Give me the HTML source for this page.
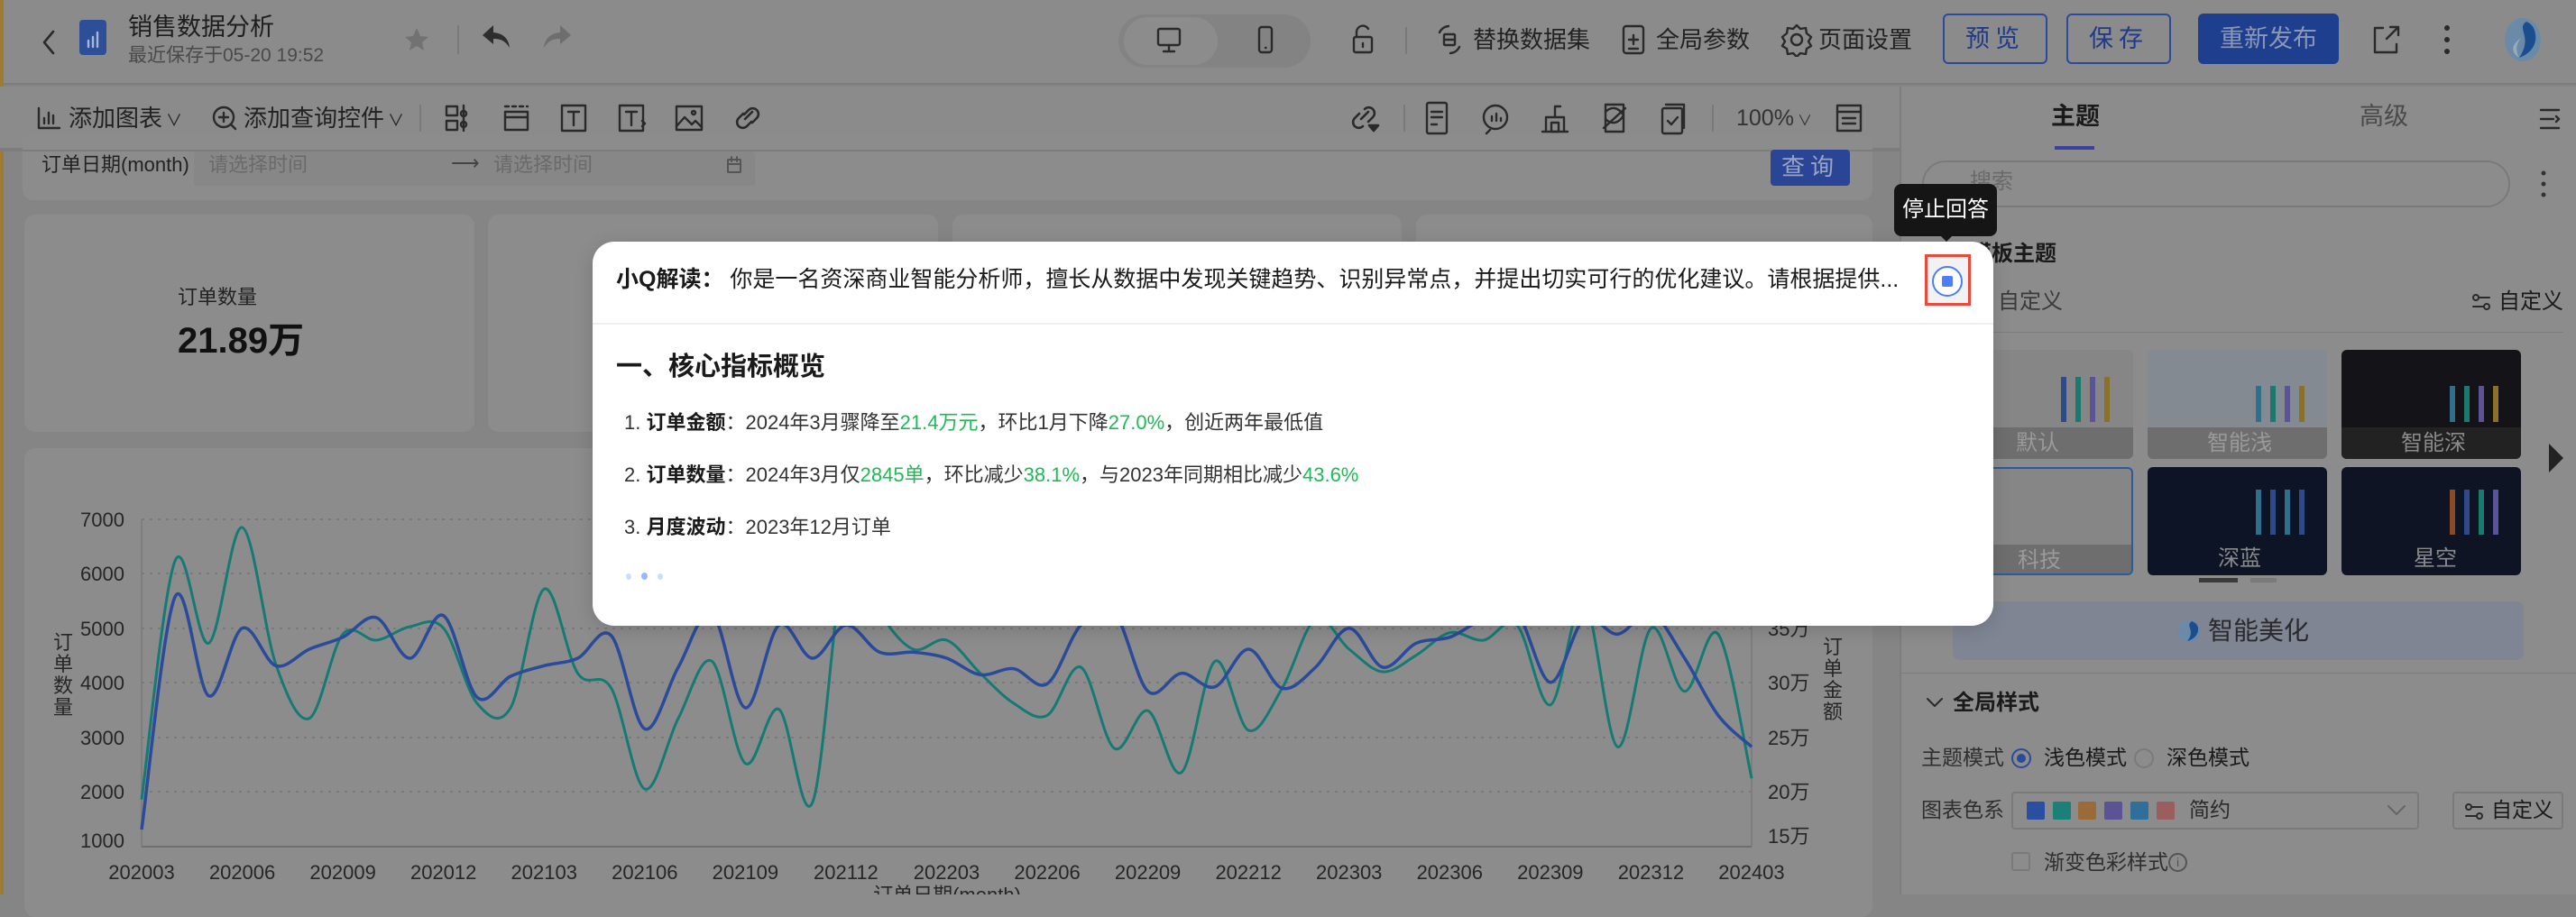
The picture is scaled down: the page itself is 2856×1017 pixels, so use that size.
<!DOCTYPE html>
<html><head><meta charset="utf-8">
<style>
*{box-sizing:border-box;margin:0;padding:0}
body{width:2856px;height:992px;overflow:hidden;background:#858585;font-family:"Liberation Sans","Noto Sans CJK SC",sans-serif;color:#262626;position:relative}
.a{position:absolute}
.t{position:absolute;white-space:nowrap;line-height:1}
svg.i{position:absolute;fill:none;stroke:#2a2a2a;stroke-width:2.6;stroke-linecap:round;stroke-linejoin:round}
</style></head><body>

<!-- header -->
<div class="a" style="left:0;top:0;width:2856px;height:94px;background:#8b8b8b;border-bottom:2px solid #7d7d7d"></div>
<div class="a" style="left:0;top:0;width:4px;height:992px;background:#a07a30"></div>
<svg class="i" style="left:44px;top:32px" width="20" height="30"><path d="M15 3 L5 15 L15 27"/></svg>
<div class="a" style="left:88px;top:22px;width:30px;height:39px;background:#2d4f97;border-radius:4px"></div>
<svg class="i" style="left:94px;top:32px;stroke:#a8b6d8;stroke-width:2.4" width="20" height="24"><path d="M4 20V13M9 20V9M14 20V4"/></svg>
<div class="t" style="left:142px;top:17px;font-size:27px;color:#1e1e1e">销售数据分析</div>
<div class="t" style="left:142px;top:51px;font-size:21px;color:#4a4a4a">最近保存于05-20 19:52</div>
<svg class="a" style="left:447px;top:29px" width="30" height="30"><path d="M15 2l4 9 9 1-7 6 2 9-8-5-8 5 2-9-7-6 9-1z" fill="#727272"/></svg>
<div class="a" style="left:507px;top:28px;width:2px;height:32px;background:#7a7a7a"></div>
<svg class="a" style="left:533px;top:26px" width="36" height="30"><path d="M14 2L2 13l12 10v-6c8 0 13 2 18 10-1-10-7-16-18-17z" fill="#2e2e2e"/></svg>
<svg class="a" style="left:599px;top:26px" width="36" height="30"><path d="M22 2l12 11-12 10v-6c-8 0-13 2-18 10 1-10 7-16 18-17z" fill="#6e6e6e"/></svg>
<div class="a" style="left:1240px;top:16px;width:213px;height:59px;border-radius:30px;background:#838383"></div>
<div class="a" style="left:1246px;top:19px;width:104px;height:53px;border-radius:27px;background:#8c8c8c"></div>
<svg class="i" style="left:1281px;top:30px;stroke-width:2.4" width="32" height="30"><rect x="3" y="2" width="24" height="18" rx="2"/><path d="M15 20v6M9 27h12"/></svg>
<svg class="i" style="left:1393px;top:28px;stroke-width:2.4" width="20" height="34"><rect x="3" y="2" width="14" height="28" rx="3"/><path d="M10 25h0.5"/></svg>
<svg class="i" style="left:1497px;top:26px;stroke-width:2.4" width="28" height="36"><path d="M7 15V9a7 7 0 0 1 13-3"/><rect x="4" y="15" width="20" height="17" rx="2"/><path d="M14 22v4"/></svg>
<div class="a" style="left:1558px;top:30px;width:2px;height:30px;background:#7a7a7a"></div>
<svg class="i" style="left:1590px;top:26px;stroke-width:2.4" width="34" height="36"><path d="M6 10a12 12 0 0 1 10-7M28 26a12 12 0 0 1-10 7"/><rect x="11" y="12" width="12" height="12" rx="1"/><path d="M11 18h12"/></svg>
<div class="t" style="left:1633px;top:31px;font-size:26px;color:#222">替换数据集</div>
<svg class="i" style="left:1796px;top:25px;stroke-width:2.4" width="30" height="38"><rect x="4" y="4" width="22" height="30" rx="3"/><path d="M10 19h10M15 14v10M10 29h10"/></svg>
<div class="t" style="left:1836px;top:31px;font-size:26px;color:#222">全局参数</div>
<svg class="i" style="left:1974px;top:25px;stroke-width:2.4" width="36" height="38"><path d="M18 3l4 4 6-1 1 6 5 4-3 5 3 5-5 3-1 6-6-1-4 4-4-4-6 1-1-6-5-3 3-5-3-5 5-4 1-6 6 1z"/><circle cx="18" cy="19" r="6"/></svg>
<div class="t" style="left:2016px;top:31px;font-size:26px;color:#222">页面设置</div>
<div class="a" style="left:2154px;top:15px;width:116px;height:56px;border:2px solid #2a4a9a;border-radius:6px"></div>
<div class="t" style="left:2154px;top:30px;width:116px;text-align:center;font-size:27px;color:#1e3a8a;letter-spacing:6px">预览</div>
<div class="a" style="left:2291px;top:15px;width:116px;height:56px;border:2px solid #2a4a9a;border-radius:6px"></div>
<div class="t" style="left:2291px;top:30px;width:116px;text-align:center;font-size:27px;color:#1e3a8a;letter-spacing:6px">保存</div>
<div class="a" style="left:2437px;top:15px;width:156px;height:56px;background:#1d3f8e;border-radius:6px"></div>
<div class="t" style="left:2437px;top:30px;width:156px;text-align:center;font-size:27px;color:#8c97b8">重新发布</div>
<svg class="i" style="left:2628px;top:26px;stroke-width:2.4" width="34" height="36"><path d="M14 5H5v27h24v-9"/><path d="M18 17L31 4M22 4h9v9"/></svg>
<svg class="a" style="left:2708px;top:26px" width="10" height="36"><circle cx="5" cy="5" r="3" fill="#2a2a2a"/><circle cx="5" cy="18" r="3" fill="#2a2a2a"/><circle cx="5" cy="31" r="3" fill="#2a2a2a"/></svg>
<svg class="a" style="left:2775px;top:18px" width="44" height="52"><ellipse cx="22" cy="26" rx="20" ry="24" fill="#6a8aa8"/><path d="M26 6c-12 8 8 16-8 40 12-4 20-14 18-26-1-8-5-12-10-14z" fill="#1a4e8e"/><path d="M18 46c-12-8-6-16 2-22-6 8-6 14-2 22z" fill="#9ab"/></svg>

<!-- toolbar -->
<div class="a" style="left:0;top:96px;width:2106px;height:70px;background:#8b8b8b;border-bottom:2px solid #7d7d7d"></div>
<svg class="i" style="left:40px;top:117px;stroke-width:2.4" width="28" height="28"><path d="M3 3v22h23M9 20v-6M14 20V8M19 20v-9"/></svg>
<div class="t" style="left:76px;top:118px;font-size:26px;color:#222">添加图表<span style="font-size:18px;margin-left:4px">∨</span></div>
<svg class="i" style="left:234px;top:116px;stroke-width:2.4" width="30" height="30"><circle cx="14" cy="14" r="11"/><path d="M14 9v10M9 14h10M22 22l5 5"/></svg>
<div class="t" style="left:270px;top:118px;font-size:26px;color:#222">添加查询控件<span style="font-size:18px;margin-left:4px">∨</span></div>
<div class="a" style="left:465px;top:116px;width:2px;height:30px;background:#7a7a7a"></div>
<svg class="i" style="left:492px;top:114px;stroke-width:2.4" width="30" height="34"><rect x="3" y="4" width="12" height="10"/><rect x="3" y="20" width="12" height="10"/><path d="M22 3v28"/><circle cx="22" cy="12" r="3"/><circle cx="22" cy="24" r="3"/></svg>
<svg class="i" style="left:556px;top:114px;stroke-width:2.4" width="32" height="34"><path d="M4 4h4M12 4h4M20 4h4M28 4h1"/><rect x="4" y="10" width="25" height="20"/><path d="M4 16h25"/></svg>
<svg class="i" style="left:620px;top:114px;stroke-width:2.4" width="32" height="34"><rect x="3" y="3" width="26" height="28"/><path d="M10 10h12M16 10v15"/></svg>
<svg class="i" style="left:684px;top:114px;stroke-width:2.4" width="34" height="34"><rect x="3" y="3" width="26" height="28"/><path d="M10 10h12M16 10v15M28 20l3 3-3 3"/></svg>
<svg class="i" style="left:747px;top:114px;stroke-width:2.4" width="34" height="34"><rect x="3" y="4" width="28" height="26"/><path d="M3 26l9-10 8 8 4-4 7 7"/><circle cx="22" cy="11" r="2"/></svg>
<svg class="i" style="left:812px;top:112px;stroke-width:2.6" width="34" height="38"><path d="M14 20l8-8M12 14l-5 5a6 6 0 0 0 9 9l5-5M22 24l5-5a6 6 0 0 0-9-9l-5 5"/></svg>
<svg class="i" style="left:1496px;top:112px;stroke-width:2.6" width="36" height="38"><path d="M13 20l8-8M11 14l-5 5a6 6 0 0 0 9 9M21 23l5-5a6 6 0 0 0-9-9"/><path d="M22 27h10l-5 6z" fill="#2a2a2a"/></svg>
<div class="a" style="left:1556px;top:116px;width:2px;height:30px;background:#7a7a7a"></div>
<svg class="i" style="left:1578px;top:110px;stroke-width:2.4" width="30" height="42"><rect x="4" y="4" width="22" height="34" rx="2"/><path d="M9 14h12M9 20h12M9 28h6"/></svg>
<svg class="i" style="left:1640px;top:112px;stroke-width:2.4" width="36" height="38"><circle cx="18" cy="18" r="13"/><path d="M12 32l-4 4M14 22v-5M19 22v-8M24 22v-3"/></svg>
<svg class="i" style="left:1706px;top:112px;stroke-width:2.4" width="36" height="38"><path d="M4 34h28M8 34V18h20v16M18 18V6M18 6h6"/><rect x="14" y="24" width="8" height="10"/></svg>
<svg class="i" style="left:1772px;top:112px;stroke-width:2.4" width="36" height="38"><path d="M8 4h20v30H8V4z"/><path d="M8 12c6-6 14-6 20 4-6 10-14 10-20 4"/><path d="M6 30L30 8"/></svg>
<svg class="i" style="left:1838px;top:112px;stroke-width:2.4" width="34" height="38"><rect x="5" y="8" width="22" height="28" rx="2"/><path d="M9 4h20v26"/><path d="M11 22l4 4 7-8"/></svg>
<div class="a" style="left:1898px;top:116px;width:2px;height:30px;background:#7a7a7a"></div>
<div class="t" style="left:1925px;top:119px;font-size:25px;color:#333">100%<span style="font-size:16px;margin-left:4px">∨</span></div>
<svg class="i" style="left:2034px;top:114px;stroke-width:2.4" width="32" height="34"><rect x="3" y="3" width="26" height="28"/><path d="M3 10h26M9 17h14M9 23h14"/></svg>

<!-- canvas: filter card -->
<div class="a" style="left:25px;top:150px;width:2051px;height:72px;background:#8c8c8c;border-radius:0 0 12px 12px"></div>
<div class="a" style="left:0;top:166px;width:2106px;height:2px;background:#7d7d7d"></div>
<div class="t" style="left:46px;top:172px;font-size:22px;color:#222">订单日期(month)</div>
<div class="a" style="left:215px;top:168px;width:622px;height:38px;background:#878787;border-radius:4px"></div>
<div class="t" style="left:231px;top:172px;font-size:22px;color:#6a6a6a">请选择时间</div>
<div class="t" style="left:500px;top:170px;font-size:22px;color:#444">⟶</div>
<div class="t" style="left:547px;top:172px;font-size:22px;color:#6a6a6a">请选择时间</div>
<svg class="i" style="left:804px;top:172px;stroke:#555;stroke-width:2" width="20" height="22"><rect x="3" y="5" width="14" height="14" rx="1"/><path d="M3 10h14M7 2v5M13 2v5"/></svg>
<div class="a" style="left:1963px;top:166px;width:88px;height:40px;background:#2a4595;border-radius:4px"></div>
<div class="t" style="left:1963px;top:172px;width:88px;text-align:center;font-size:26px;color:#9aa4c4;letter-spacing:6px">查询</div>

<!-- KPI cards -->
<div class="a" style="left:27px;top:238px;width:499px;height:241px;background:#8c8c8c;border-radius:12px"></div>
<div class="a" style="left:541px;top:238px;width:499px;height:241px;background:#8c8c8c;border-radius:12px"></div>
<div class="a" style="left:1056px;top:238px;width:498px;height:241px;background:#8c8c8c;border-radius:12px"></div>
<div class="a" style="left:1570px;top:238px;width:506px;height:241px;background:#8c8c8c;border-radius:12px"></div>
<div class="t" style="left:197px;top:319px;font-size:22px;color:#222">订单数量</div>
<div class="t" style="left:197px;top:358px;font-size:40px;font-weight:bold;color:#111">21.89万</div>

<!-- chart card -->
<div class="a" style="left:27px;top:497px;width:2049px;height:520px;background:#8c8c8c;border-radius:12px"></div>
<svg class="a" style="left:0;top:0" width="2106" height="992" id="ch">
<g stroke="#7a7a7a" stroke-width="2" stroke-dasharray="3 6">
<line x1="157" y1="576" x2="1942" y2="576"/><line x1="157" y1="636" x2="1942" y2="636"/><line x1="157" y1="697" x2="1942" y2="697"/><line x1="157" y1="757" x2="1942" y2="757"/><line x1="157" y1="818" x2="1942" y2="818"/><line x1="157" y1="878" x2="1942" y2="878"/>
</g>
<line x1="157" y1="939" x2="1942" y2="939" stroke="#6e6e6e" stroke-width="2"/>
<line x1="157" y1="576" x2="157" y2="939" stroke="#7a7a7a" stroke-width="1.5"/>
<line x1="1942" y1="576" x2="1942" y2="939" stroke="#7a7a7a" stroke-width="1.5"/>
<g font-size="22" fill="#262626" text-anchor="end" font-family="Liberation Sans, sans-serif">
<text x="138" y="584">7000</text><text x="138" y="644">6000</text><text x="138" y="705">5000</text><text x="138" y="765">4000</text><text x="138" y="826">3000</text><text x="138" y="886">2000</text><text x="138" y="940">1000</text>
</g>
<g font-size="22" fill="#262626" font-family="Liberation Sans, Noto Sans CJK SC, sans-serif">
<text x="1960" y="705">35万</text><text x="1960" y="765">30万</text><text x="1960" y="826">25万</text><text x="1960" y="886">20万</text><text x="1960" y="935">15万</text>
</g>
<g font-size="22" fill="#262626" text-anchor="middle" font-family="Liberation Sans, sans-serif" id="xl"></g>
<g font-size="22" fill="#262626" font-family="Noto Sans CJK SC, sans-serif" text-anchor="middle">
<text x="70" y="720">订</text><text x="70" y="744">单</text><text x="70" y="768">数</text><text x="70" y="792">量</text>
<text x="2032" y="725">订</text><text x="2032" y="749">单</text><text x="2032" y="773">金</text><text x="2032" y="797">额</text>
</g>
<text x="1050" y="1000" font-size="22" fill="#262626" text-anchor="middle" font-family="Liberation Sans, Noto Sans CJK SC, sans-serif">订单日期(month)</text>
<path id="pg" fill="none" stroke="#167a74" stroke-width="3"/>
<path id="pb" fill="none" stroke="#2a4a9a" stroke-width="3.5"/>
</svg>

<!-- right panel -->
<div class="a" style="left:2106px;top:96px;width:750px;height:896px;background:#8c8c8c;border-left:2px solid #7d7d7d"></div>
<div class="t" style="left:2274px;top:116px;font-size:27px;font-weight:bold;color:#1a1a1a">主题</div>
<div class="t" style="left:2616px;top:116px;font-size:27px;color:#4a4a4a">高级</div>
<div class="a" style="left:2278px;top:162px;width:44px;height:4px;background:#3b3f9e"></div>
<svg class="i" style="left:2814px;top:118px;stroke-width:2.4" width="26" height="28"><path d="M3 4h20M3 14h14M3 24h20M20 11l3 3-3 3"/></svg>
<div class="a" style="left:2131px;top:178px;width:652px;height:52px;border:2px solid #7a7a7a;border-radius:26px"></div>
<div class="t" style="left:2184px;top:190px;font-size:24px;color:#6a6a6a">搜索</div>
<svg class="a" style="left:2816px;top:188px" width="8" height="32"><circle cx="4" cy="4" r="2.5" fill="#333"/><circle cx="4" cy="16" r="2.5" fill="#333"/><circle cx="4" cy="28" r="2.5" fill="#333"/></svg>
<div class="t" style="left:2184px;top:270px;font-size:24px;font-weight:bold;color:#1a1a1a">模板主题</div>
<div class="t" style="left:2215px;top:323px;font-size:24px;color:#3a3a3a">自定义</div>
<svg class="i" style="left:2740px;top:324px;stroke-width:2" width="22" height="22"><circle cx="5" cy="6" r="3"/><path d="M9 6h11M2 16h11"/><circle cx="17" cy="16" r="3"/></svg>
<div class="t" style="left:2770px;top:323px;font-size:24px;color:#1a1a1a">自定义</div>
<div class="a" style="left:2130px;top:368px;width:712px;height:1px;background:#7c7c7c"></div>

<!-- thumbnails -->
<div class="a" style="left:2165px;top:388px;width:200px;height:121px;background:#868686;border-radius:6px;overflow:hidden">
 <div class="a" style="left:120px;top:30px;width:6px;height:50px;background:#2f4a8a"></div><div class="a" style="left:136px;top:30px;width:6px;height:50px;background:#1a7a70"></div><div class="a" style="left:152px;top:30px;width:6px;height:50px;background:#5a5395"></div><div class="a" style="left:168px;top:30px;width:6px;height:50px;background:#8a7028"></div>
 <div class="a" style="left:0;top:86px;width:200px;height:35px;background:#6e6e6e"></div>
 <div class="t" style="left:70px;top:92px;font-size:24px;color:#9a9a9a">默认</div></div>
<div class="a" style="left:2381px;top:388px;width:199px;height:121px;background:#838a92;border-radius:6px;overflow:hidden">
 <div class="a" style="left:120px;top:40px;width:6px;height:40px;background:#2f6f8a"></div><div class="a" style="left:136px;top:40px;width:6px;height:40px;background:#1a7a70"></div><div class="a" style="left:152px;top:40px;width:6px;height:40px;background:#5a5395"></div><div class="a" style="left:168px;top:40px;width:6px;height:40px;background:#8a7028"></div>
 <div class="a" style="left:0;top:86px;width:199px;height:35px;background:#6e6e6e"></div>
 <div class="t" style="left:66px;top:92px;font-size:24px;color:#9a9a9a">智能浅</div></div>
<div class="a" style="left:2596px;top:388px;width:199px;height:121px;background:#141418;border-radius:6px;overflow:hidden">
 <div class="a" style="left:120px;top:40px;width:6px;height:40px;background:#2f6f8a"></div><div class="a" style="left:136px;top:40px;width:6px;height:40px;background:#1a7a70"></div><div class="a" style="left:152px;top:40px;width:6px;height:40px;background:#5a5395"></div><div class="a" style="left:168px;top:40px;width:6px;height:40px;background:#8a7028"></div>
 <div class="a" style="left:0;top:86px;width:199px;height:35px;background:#222"></div>
 <div class="t" style="left:66px;top:92px;font-size:24px;color:#8a8a8a">智能深</div></div>
<div class="a" style="left:2165px;top:518px;width:200px;height:120px;background:#868686;border:2px solid #2f5a9a;border-radius:6px;overflow:hidden">
 <div class="a" style="left:0;top:84px;width:200px;height:36px;background:#6e6e6e"></div>
 <div class="t" style="left:70px;top:90px;font-size:24px;color:#9a9a9a">科技</div></div>
<div class="a" style="left:2381px;top:518px;width:199px;height:120px;background:#0c1426;border-radius:6px;overflow:hidden">
 <div class="a" style="left:120px;top:25px;width:6px;height:50px;background:#2f6f8a"></div><div class="a" style="left:136px;top:25px;width:6px;height:50px;background:#2f4a8a"></div><div class="a" style="left:152px;top:25px;width:6px;height:50px;background:#2f6f8a"></div><div class="a" style="left:168px;top:25px;width:6px;height:50px;background:#2f4a8a"></div>
 <div class="t" style="left:78px;top:90px;font-size:24px;color:#8a8a8a">深蓝</div></div>
<div class="a" style="left:2596px;top:518px;width:199px;height:120px;background:#0f1424;border-radius:6px;overflow:hidden">
 <div class="a" style="left:120px;top:25px;width:6px;height:50px;background:#8a4a28"></div><div class="a" style="left:136px;top:25px;width:6px;height:50px;background:#2f4a8a"></div><div class="a" style="left:152px;top:25px;width:6px;height:50px;background:#1a7a70"></div><div class="a" style="left:168px;top:25px;width:6px;height:50px;background:#5a5395"></div>
 <div class="t" style="left:80px;top:90px;font-size:24px;color:#8a8a8a">星空</div></div>
<svg class="a" style="left:2824px;top:490px" width="20" height="36"><path d="M2 2l16 16-16 16z" fill="#222"/></svg>
<div class="a" style="left:2438px;top:641px;width:43px;height:5px;background:#3a3a3a"></div>
<div class="a" style="left:2495px;top:641px;width:29px;height:5px;background:#7a7a7a"></div>
<div class="a" style="left:2165px;top:667px;width:633px;height:65px;background:#7f8593;border-radius:8px"></div>
<svg class="a" style="left:2414px;top:686px" width="26" height="28"><circle cx="13" cy="14" r="12" fill="#6a8aa8"/><path d="M16 3c-8 5 5 10-5 22 8-2 13-8 12-15-1-4-4-6-7-7z" fill="#1a4e8e"/></svg>
<div class="t" style="left:2448px;top:686px;font-size:28px;color:#2a2a2a">智能美化</div>
<div class="a" style="left:2107px;top:746px;width:749px;height:1px;background:#7c7c7c"></div>
<svg class="i" style="left:2134px;top:772px;stroke-width:2" width="22" height="16"><path d="M3 3l8 8 8-8"/></svg>
<div class="t" style="left:2165px;top:768px;font-size:24px;font-weight:bold;color:#1a1a1a">全局样式</div>
<div class="t" style="left:2130px;top:829px;font-size:23px;color:#2f2f2f">主题模式</div>
<div class="a" style="left:2230px;top:830px;width:22px;height:22px;border:2px solid #2a4a9a;border-radius:50%"></div>
<div class="a" style="left:2236px;top:836px;width:10px;height:10px;background:#2a4a9a;border-radius:50%"></div>
<div class="t" style="left:2266px;top:829px;font-size:23px;color:#1a1a1a">浅色模式</div>
<div class="a" style="left:2366px;top:830px;width:22px;height:22px;border:2px solid #7a7a7a;border-radius:50%"></div>
<div class="t" style="left:2402px;top:829px;font-size:23px;color:#1a1a1a">深色模式</div>
<div class="t" style="left:2130px;top:887px;font-size:23px;color:#2f2f2f">图表色系</div>
<div class="a" style="left:2230px;top:878px;width:452px;height:42px;border:2px solid #7a7a7a;border-radius:4px"></div>
<div class="a" style="left:2247px;top:889px;width:20px;height:20px;background:#2a4fa0;border-radius:2px"></div>
<div class="a" style="left:2276px;top:889px;width:20px;height:20px;background:#1a8078;border-radius:2px"></div>
<div class="a" style="left:2304px;top:889px;width:20px;height:20px;background:#9a6a38;border-radius:2px"></div>
<div class="a" style="left:2333px;top:889px;width:20px;height:20px;background:#5a5395;border-radius:2px"></div>
<div class="a" style="left:2362px;top:889px;width:20px;height:20px;background:#2f6f9a;border-radius:2px"></div>
<div class="a" style="left:2391px;top:889px;width:20px;height:20px;background:#9a5e5e;border-radius:2px"></div>
<div class="t" style="left:2427px;top:887px;font-size:23px;color:#2a2a2a">简约</div>
<svg class="i" style="left:2646px;top:892px;stroke:#666;stroke-width:2" width="22" height="14"><path d="M2 2l9 9 9-9"/></svg>
<div class="a" style="left:2719px;top:878px;width:123px;height:42px;border:2px solid #7a7a7a;border-radius:4px"></div>
<svg class="i" style="left:2732px;top:889px;stroke-width:2" width="22" height="22"><circle cx="5" cy="6" r="3"/><path d="M9 6h11M2 16h11"/><circle cx="17" cy="16" r="3"/></svg>
<div class="t" style="left:2762px;top:887px;font-size:23px;color:#1a1a1a">自定义</div>
<div class="a" style="left:2230px;top:945px;width:21px;height:21px;border:2px solid #7a7a7a;border-radius:3px"></div>
<div class="t" style="left:2266px;top:945px;font-size:23px;color:#2f2f2f">渐变色彩样式</div>
<div class="a" style="left:2404px;top:946px;width:21px;height:21px;border:2px solid #555;border-radius:50%;font-size:14px;text-align:center;line-height:17px;color:#555">i</div>

<!-- modal -->
<div class="a" style="left:657px;top:268px;width:1553px;height:426px;background:#fff;border-radius:24px;box-shadow:0 4px 20px rgba(0,0,0,.15)"></div>
<div class="t" style="left:683px;top:298px;font-size:25px;color:#1a1a1a"><b>小Q解读：</b>&nbsp;你是一名资深商业智能分析师，擅长从数据中发现关键趋势、识别异常点，并提出切实可行的优化建议。请根据提供...</div>
<div class="a" style="left:657px;top:358px;width:1553px;height:2px;background:#eee"></div>
<div class="t" style="left:683px;top:393px;font-size:29px;font-weight:bold;color:#1a1a1a">一、核心指标概览</div>
<div class="t" style="left:692px;top:458px;font-size:22px;color:#333">1. <b style="color:#1a1a1a">订单金额</b>：2024年3月骤降至<span style="color:#1fb955">21.4万元</span>，环比1月下降<span style="color:#1fb955">27.0%</span>，创近两年最低值</div>
<div class="t" style="left:692px;top:516px;font-size:22px;color:#333">2. <b style="color:#1a1a1a">订单数量</b>：2024年3月仅<span style="color:#1fb955">2845单</span>，环比减少<span style="color:#1fb955">38.1%</span>，与2023年同期相比减少<span style="color:#1fb955">43.6%</span></div>
<div class="t" style="left:692px;top:574px;font-size:22px;color:#333">3. <b style="color:#1a1a1a">月度波动</b>：2023年12月订单</div>
<div class="a" style="left:694px;top:636px;width:6px;height:7px;background:#cfdcff;border-radius:50%"></div>
<div class="a" style="left:711px;top:635px;width:7px;height:8px;background:#9bb6ff;border-radius:50%"></div>
<div class="a" style="left:729px;top:636px;width:6px;height:7px;background:#cfdcff;border-radius:50%"></div>
<div class="a" style="left:2134px;top:282px;width:51px;height:57px;border:3px solid #ea4a3c;background:#f2f2f2"></div>
<div class="a" style="left:2142px;top:295px;width:34px;height:34px;border:2.5px solid #4d7ef7;border-radius:50%;background:#fff"></div>
<div class="a" style="left:2153px;top:306px;width:12px;height:12px;background:#4d7ef7;border-radius:2px"></div>
<div class="a" style="left:2100px;top:204px;width:114px;height:58px;background:#151515;border-radius:8px"></div>
<div class="a" style="left:2150px;top:260px;width:0;height:0;border-left:8px solid transparent;border-right:8px solid transparent;border-top:8px solid #151515"></div>
<div class="t" style="left:2100px;top:221px;width:114px;text-align:center;font-size:24px;color:#fff">停止回答</div>

<script>
var B=[1320,545,875,650,775,720,680,615,750,608,880,810,775,750,675,985,780,600,915,640,750,640,730,730,750,805,785,835,640,600,860,800,845,720,850,780,650,780,700,680,620,600,830,620,670,600,750,940,1045];
var G=[1220,425,700,315,770,950,670,690,645,650,900,915,520,800,850,1185,950,760,1100,920,1230,400,600,720,690,800,900,940,780,1050,925,1130,760,990,850,620,720,795,740,665,690,640,905,560,1045,650,860,670,1150];
function pts(a){return a.map(function(d,i){return [157+i*37.19,d/3+480];});}
function cr(p){var s="M"+p[0][0]+" "+p[0][1];for(var i=0;i<p.length-1;i++){var p0=p[i-1]||p[i],p1=p[i],p2=p[i+1],p3=p[i+2]||p2;
var c1x=p1[0]+(p2[0]-p0[0])/6,c1y=p1[1]+(p2[1]-p0[1])/6,c2x=p2[0]-(p3[0]-p1[0])/6,c2y=p2[1]-(p3[1]-p1[1])/6;
s+=" C"+c1x.toFixed(1)+" "+c1y.toFixed(1)+" "+c2x.toFixed(1)+" "+c2y.toFixed(1)+" "+p2[0].toFixed(1)+" "+p2[1].toFixed(1);}return s;}
document.getElementById("pb").setAttribute("d",cr(pts(B)));
document.getElementById("pg").setAttribute("d",cr(pts(G)));
var xl=document.getElementById("xl"),labs=["202003","202006","202009","202012","202103","202106","202109","202112","202203","202206","202209","202212","202303","202306","202309","202312","202403"];
labs.forEach(function(l,i){var t=document.createElementNS("http://www.w3.org/2000/svg","text");t.setAttribute("x",157+i*111.56);t.setAttribute("y",975);t.textContent=l;xl.appendChild(t);});
</script>
</body></html>
